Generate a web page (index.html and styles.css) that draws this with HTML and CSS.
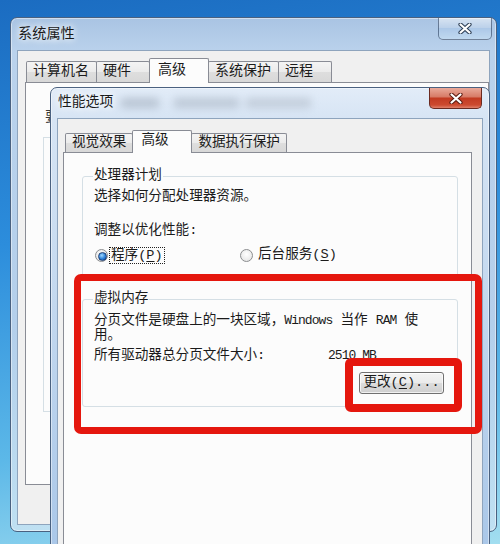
FILE: index.html
```html
<!DOCTYPE html>
<html lang="zh-CN">
<head>
  <meta charset="UTF-8">
  <title>性能选项</title>
  <link rel="stylesheet" href="styles.css">
</head>
<body>
  <!-- Back window: 系统属性 -->
  <div class="window window-back">
    <div class="titlebar">
      <span class="title">系统属性</span>
      <span class="close close-glass">
        <svg width="14" height="11" viewBox="0 0 14 11">
          <path d="M2.5 1.5 L11.5 9.5 M11.5 1.5 L2.5 9.5" stroke="#2c3e54" stroke-width="4.2" stroke-linecap="round"/>
          <path d="M2.5 1.5 L11.5 9.5 M11.5 1.5 L2.5 9.5" stroke="#ffffff" stroke-width="2.2" stroke-linecap="round"/>
        </svg>
      </span>
    </div>
    <div class="client">
      <div class="tabs tabs-back">
        <div class="tab">计算机名</div>
        <div class="tab">硬件</div>
        <div class="tab active">高级</div>
        <div class="tab">系统保护</div>
        <div class="tab">远程</div>
      </div>
      <div class="panel panel-back">
        <p class="admin-note">要进行大多数更改，您必须作为管理员登录。</p>
        <div class="ghost-box"></div>
      </div>
    </div>
  </div>

  <!-- Front window: 性能选项 -->
  <div class="window window-front">
    <div class="titlebar">
      <span class="title">性能选项</span>
      <span class="title-blur"></span>
      <span class="close close-red">
        <svg width="14" height="11" viewBox="0 0 14 11">
          <path d="M2.5 1.5 L11.5 9.5 M11.5 1.5 L2.5 9.5" stroke="#5a1a10" stroke-width="4.2" stroke-linecap="round"/>
          <path d="M2.5 1.5 L11.5 9.5 M11.5 1.5 L2.5 9.5" stroke="#ffffff" stroke-width="2.2" stroke-linecap="round"/>
        </svg>
      </span>
    </div>
    <div class="client">
      <div class="tabs tabs-front">
        <div class="tab">视觉效果</div>
        <div class="tab active">高级</div>
        <div class="tab">数据执行保护</div>
      </div>
      <div class="panel panel-front">
        <fieldset class="group group-cpu">
          <legend>处理器计划</legend>
          <p class="line first">选择如何分配处理器资源。</p>
          <p class="line gap">调整以优化性能:</p>
          <div class="radio-row">
            <div class="option option-first">
              <span class="radio checked"></span>
              <span class="focus">程序(<u>P</u>)</span>
            </div>
            <div class="option">
              <span class="radio"></span>
              <span class="option-text">后台服务(<u>S</u>)</span>
            </div>
          </div>
        </fieldset>

        <fieldset class="group group-mem">
          <legend>虚拟内存</legend>
          <p class="line mem-text">分页文件是硬盘上的一块区域，<span class="en">Windows</span> 当作 <span class="en">RAM</span> 使<br>用。</p>
          <div class="size-row">
            <span class="size-label">所有驱动器总分页文件大小:</span>
            <span class="en">2510 MB</span>
          </div>
          <div class="button-row">
            <button class="btn">更改(<u>C</u>)...</button>
          </div>
        </fieldset>
      </div>
    </div>
  </div>

  <!-- Red annotation marks -->
  <div class="mark mark-group"></div>
  <div class="mark mark-button"></div>
</body>
</html>
```

FILE: styles.css
```css
* {
  box-sizing: border-box;
}

body {
  margin: 0;
  width: 500px;
  height: 544px;
  overflow: hidden;
  position: relative;
  font-family: "Liberation Mono", "Noto Sans CJK SC", monospace;
  font-size: 13.6px;
  color: #1b1b1b;
  background: linear-gradient(172deg, #1b6cc1 0%, #2c8ddc 40%, #5cb8e8 75%, #a3def0 100%);
}

p {
  margin: 0;
}

/* Aero windows */
.window {
  position: absolute;
  display: flex;
  flex-direction: column;
  border: 1px solid #4a6180;
  border-radius: 7px 7px 0 0;
  padding: 0 6px 6px;
  box-shadow: inset 0 0 0 1px rgba(255, 255, 255, 0.45);
}

.window-back {
  left: 10px;
  top: 17px;
  width: 487px;
  height: 515px;
  border-radius: 7px;
  background: linear-gradient(#a9c4e3, #bad2ec 34px, #b4cfeb 60%, #bfe0f2);
}

.window-front {
  left: 50px;
  top: 87px;
  width: 440px;
  height: 480px;
  background: linear-gradient(#e2ecf8, #d6e4f4 32px, #c3d8ef 45%, #a8c6e8);
}

.titlebar {
  display: flex;
  align-items: flex-start;
  height: 32px;
}

.window-front .titlebar {
  height: 30px;
}

.title {
  padding: 7px 0 0 1px;
  line-height: 18px;
  font-size: 14.2px;
  color: #1a1a1a;
  text-shadow: 0 0 6px #ffffff, 0 0 10px rgba(255, 255, 255, 0.9);
}

.window-front .title {
  padding: 6px 0 0 1px;
  font-size: 13.8px;
}

.title-blur {
  width: 190px;
  height: 10px;
  margin: 10px 0 0 8px;
  background: linear-gradient(90deg, #9aa6b5 0 20%, transparent 20% 28%, #a3aebc 28% 62%, transparent 62% 66%, #adb7c4 66%);
  filter: blur(4px);
  opacity: 0.55;
}

.close {
  margin-left: auto;
  display: flex;
  align-items: center;
  justify-content: center;
  border: 1px solid;
  border-top: none;
  border-radius: 0 0 5px 5px;
}

.close-glass {
  width: 54px;
  height: 22px;
  margin-right: -2px;
  border-color: rgba(40, 60, 90, 0.6);
  background: linear-gradient(rgba(255, 255, 255, 0.55), rgba(255, 255, 255, 0.15) 50%, rgba(170, 200, 235, 0.35) 50%, rgba(200, 225, 245, 0.6));
}

.close-red {
  width: 53px;
  height: 21px;
  margin-right: 1px;
  border-color: #6b2a20;
  background: linear-gradient(#e9a99a, #d77a66 45%, #c23a22 50%, #cc4a2f 85%, #e0806a);
}

.client {
  flex: 1;
  display: flex;
  flex-direction: column;
  background: #f0f0f0;
  border: 1px solid #8ea4bd;
}

/* Tabs */
.tabs {
  display: flex;
  align-items: flex-end;
  position: relative;
  z-index: 1;
  margin-bottom: -1px;
}

.tabs-back {
  margin: 7px 0 -1px 9px;
}

.tabs-front {
  margin: 11px 0 -1px 8px;
}

.tab {
  height: 21px;
  margin-bottom: 1px;
  margin-left: -1px;
  padding: 0 7px 0 6px;
  min-width: 54px;
  border: 1px solid #898c95;
  border-bottom: none;
  border-radius: 2px 2px 0 0;
  background: linear-gradient(#f4f4f4, #ebebeb 50%, #dedede 50%, #d8d8d8);
  line-height: 19px;
  font-size: 14px;
  white-space: nowrap;
}

.tab.active {
  height: 25px;
  margin-bottom: 0;
  min-width: 60px;
  padding: 0 8px;
  background: #fcfcfc;
  line-height: 23px;
}

.tabs-front .tab {
  height: 19px;
  font-size: 13.6px;
  line-height: 17px;
  min-width: 0;
  padding: 0 6px;
}

.tabs-front .tab.active {
  height: 23px;
  min-width: 60px;
  padding: 0 8px;
  line-height: 19px;
}

.panel {
  position: relative;
  background: #fcfcfc;
  border: 1px solid #898c95;
}

.panel-back {
  margin-left: 7px;
  height: 403px;
  padding: 26px 0 0 19px;
}

.admin-note {
  line-height: 16px;
  font-size: 14px;
  color: #3a3a3a;
}

.ghost-box {
  margin: 12px 10px 0 -2px;
  height: 275px;
  border: 1px solid #d5dfe5;
}

.panel-front {
  flex: 1;
  margin: 0 10px 0 5px;
}

/* Group boxes */
.group {
  margin: 0 13px 0 18px;
  padding: 0 13px 15px 11px;
  border: 1px solid #d5dfe5;
  border-radius: 3px;
  min-width: 0;
}

.group legend {
  padding: 0 1px;
  margin-left: -1px;
  line-height: 16px;
}

.group-cpu {
  margin-top: 15px;
}

.group-mem {
  margin-top: 12px;
  padding-bottom: 12px;
}

.line {
  line-height: 16px;
}

.line.first {
  margin-top: 5px;
}

.line.gap {
  margin-top: 18px;
}

.radio-row {
  display: flex;
  align-items: center;
  margin-top: 8px;
  height: 16px;
}

.option {
  display: flex;
  align-items: center;
}

.option-first {
  width: 145px;
}

.radio {
  width: 13px;
  height: 13px;
  margin-left: 1px;
  border-radius: 50%;
  border: 1px solid #8b8d8f;
  background: radial-gradient(circle at 50% 40%, #ffffff, #e0e0e0);
  position: relative;
}

.radio.checked::after {
  content: "";
  position: absolute;
  left: 2px;
  top: 2px;
  width: 7px;
  height: 7px;
  border-radius: 50%;
  border: 1px solid #1d3f74;
  background: radial-gradient(circle at 40% 35%, #9fd8ff, #2b7fd8 55%, #134a9a);
}

.focus {
  margin-left: 1px;
  padding: 0 1px;
  border: 1px dotted #222;
  line-height: 15px;
}

.option-text {
  margin-left: 5px;
  line-height: 16px;
}

u {
  text-underline-offset: 2px;
}

.mem-text {
  margin-top: 6px;
  line-height: 15px;
}

.en {
  font-size: 13px;
  letter-spacing: -0.95px;
}

.size-row {
  display: flex;
  align-items: baseline;
  margin-top: 5px;
  line-height: 15px;
}

.size-label {
  width: 234px;
}

.button-row {
  display: flex;
  justify-content: flex-end;
  margin-top: 9px;
}

.btn {
  width: 85px;
  height: 22px;
  padding: 0;
  font: inherit;
  color: #1b1b1b;
  border: 1px solid #707070;
  border-radius: 3px;
  background: linear-gradient(#f3f3f3, #ebebeb 50%, #dddddd 50%, #cfcfcf);
  box-shadow: inset 0 0 0 1px rgba(255, 255, 255, 0.7);
  line-height: 18px;
}

/* Red highlight marks */
.mark {
  position: absolute;
  border-style: solid;
  border-color: #e5170e;
}

.mark-group {
  left: 74px;
  top: 274px;
  width: 408px;
  height: 160px;
  border-width: 7px;
  border-radius: 7px;
}

.mark-button {
  left: 345px;
  top: 358px;
  width: 117px;
  height: 54px;
  border-width: 8px;
  border-radius: 6px;
}
```
